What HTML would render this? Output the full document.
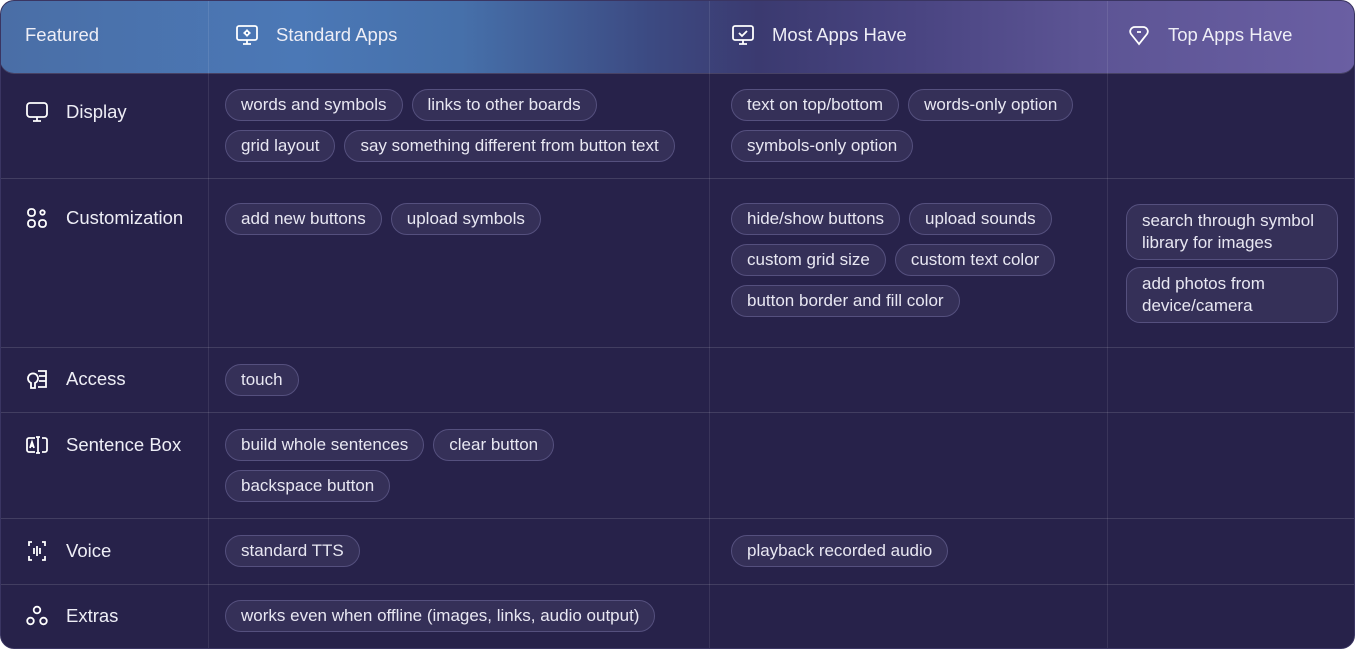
<!DOCTYPE html>
<html><head><meta charset="utf-8"><style>
*{box-sizing:border-box;margin:0;padding:0}
body{width:1355px;height:649px;background:#fff;font-family:"Liberation Sans",sans-serif;overflow:hidden}
.wrap{position:absolute;left:0;top:0;width:1355px;height:649px;background:#27224a;border-radius:14px;overflow:hidden;border:1px solid #3a3562}
.hdr{position:absolute;left:-1px;top:-1px;width:1355px;height:73px;border-radius:14px;
background:linear-gradient(90deg,#4a6ea6 0%,#4b78b6 22%,#4670aa 34%,#3c4a82 48%,#3b3a70 56%,#4a4582 68%,#5c5494 80%,#6a5fa3 100%);
box-shadow:0 1px 0 rgba(255,255,255,.15)}
.vl{position:absolute;top:0;bottom:0;width:1px;background:rgba(255,255,255,.09)}
.hl{position:absolute;left:0;right:0;height:1px;background:rgba(255,255,255,.13)}
.t{position:absolute;color:#eeeef6;font-size:18.5px;display:flex;align-items:center;gap:0}
.t svg{position:absolute;left:-41px}
.cell{position:absolute;display:flex;flex-direction:column;gap:9px}
.row{display:flex;gap:9px}
.c{height:32px;border:1px solid #55507e;background:#353058;border-radius:16px;padding:0 15px;color:#e8e7f2;font-size:17px;line-height:30px;white-space:nowrap}
.c2{height:auto;white-space:normal;line-height:22px;padding:5px 15px;border-radius:14px;width:212px}
</style></head><body><div class="wrap">
<div class="hdr"></div>
<div class="vl" style="left:207px"></div><div class="vl" style="left:708px"></div><div class="vl" style="left:1106px"></div>
<div class="hl" style="top:177px"></div><div class="hl" style="top:346px"></div><div class="hl" style="top:411px"></div><div class="hl" style="top:517px"></div><div class="hl" style="top:583px"></div>

<div class="t" style="left:24px;top:23px">Featured</div>
<div class="t" style="left:275px;top:23px"><svg width="24" height="24" viewBox="0 0 24 24" fill="none" stroke="#fff" stroke-width="1.8"><rect x="2" y="3" width="20" height="14" rx="2"/><path d="M12 17v4M8 21h8"/><circle cx="12" cy="10" r="2"/><path d="M12 6.5v1M12 12.5v1M8.5 10h1M14.5 10h1"/></svg>Standard Apps</div>
<div class="t" style="left:771px;top:23px"><svg width="24" height="24" viewBox="0 0 24 24" fill="none" stroke="#fff" stroke-width="1.8"><rect x="2" y="3" width="20" height="14" rx="2"/><path d="M12 17v4M8 21h8M8 10l3 3 5-5"/></svg>Most Apps Have</div>
<div class="t" style="left:1167px;top:23px"><svg width="24" height="24" viewBox="0 0 24 24" fill="none" stroke="#fff" stroke-width="1.8"><path d="M12 21L4 11c-2-3 0-7 4-7h8c4 0 6 4 4 7z"/><path d="M10 9h4"/></svg>Top Apps Have</div>

<div class="t" style="left:65px;top:100px"><svg width="24" height="24" viewBox="0 0 24 24" fill="none" stroke="#fff" stroke-width="1.8"><rect x="2" y="3" width="20" height="14" rx="3"/><path d="M12 17v4M8 21h8"/></svg>Display</div>
<div class="t" style="left:65px;top:206px"><svg width="24" height="24" viewBox="0 0 24 24" fill="none" stroke="#fff" stroke-width="1.8"><rect x="3" y="3" width="7" height="7" rx="3"/><rect x="3" y="14" width="7" height="7" rx="3"/><rect x="14" y="14" width="7" height="7" rx="3"/><circle cx="17.5" cy="6.5" r="2.2"/></svg>Customization</div>
<div class="t" style="left:65px;top:367px"><svg width="24" height="24" viewBox="0 0 24 24" fill="none" stroke="#fff" stroke-width="1.8"><path d="M6 21v-5a5 5 0 1 1 4 0v5zM13 4h8v5h-7M14 9h7v5h-7M14 14h7v6h-8"/></svg>Access</div>
<div class="t" style="left:65px;top:433px"><svg width="24" height="24" viewBox="0 0 24 24" fill="none" stroke="#fff" stroke-width="1.8"><path d="M10 5H4a2 2 0 0 0-2 2v10a2 2 0 0 0 2 2h6M17 5h3a2 2 0 0 1 2 2v10a2 2 0 0 1-2 2h-3M13 4v16M11 4h4M11 20h4M5 15l2-6 2 6M5.5 13h3"/></svg>Sentence Box</div>
<div class="t" style="left:65px;top:539px"><svg width="24" height="24" viewBox="0 0 24 24" fill="none" stroke="#fff" stroke-width="1.8"><path d="M7 3H4v4M17 3h3v4M7 21H4v-4M17 21h3v-4M9 9v6M12 7v10M15 9v6"/></svg>Voice</div>
<div class="t" style="left:65px;top:604px"><svg width="24" height="24" viewBox="0 0 24 24" fill="none" stroke="#fff" stroke-width="1.8"><circle cx="12" cy="6" r="3.3"/><circle cx="5.5" cy="17" r="3.3"/><circle cx="18.5" cy="17" r="3.3"/></svg>Extras</div>

<div class="cell" style="left:224px;top:88px"><div class="row"><span class="c">words and symbols</span><span class="c">links to other boards</span></div><div class="row"><span class="c">grid layout</span><span class="c">say something different from button text</span></div></div>
<div class="cell" style="left:730px;top:88px"><div class="row"><span class="c">text on top/bottom</span><span class="c">words-only option</span></div><div class="row"><span class="c">symbols-only option</span></div></div>

<div class="cell" style="left:224px;top:202px"><div class="row"><span class="c">add new buttons</span><span class="c">upload symbols</span></div></div>
<div class="cell" style="left:730px;top:202px"><div class="row"><span class="c">hide/show buttons</span><span class="c">upload sounds</span></div><div class="row"><span class="c">custom grid size</span><span class="c">custom text color</span></div><div class="row"><span class="c">button border and fill color</span></div></div>
<div class="cell" style="left:1125px;top:203px;gap:7px"><span class="c c2">search through symbol library for images</span><span class="c c2">add photos from device/camera</span></div>

<div class="cell" style="left:224px;top:363px"><div class="row"><span class="c">touch</span></div></div>
<div class="cell" style="left:224px;top:428px"><div class="row"><span class="c">build whole sentences</span><span class="c">clear button</span></div><div class="row"><span class="c">backspace button</span></div></div>
<div class="cell" style="left:224px;top:534px"><div class="row"><span class="c">standard TTS</span></div></div>
<div class="cell" style="left:730px;top:534px"><div class="row"><span class="c">playback recorded audio</span></div></div>
<div class="cell" style="left:224px;top:599px"><div class="row"><span class="c">works even when offline (images, links, audio output)</span></div></div>
</div></body></html>
